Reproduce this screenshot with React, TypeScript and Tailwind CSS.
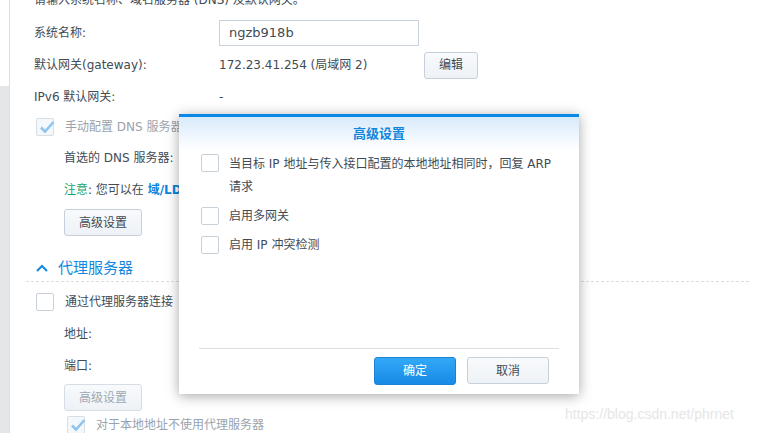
import React from 'react';

const font = { fontFamily: '"DejaVu Sans", "Noto Sans CJK SC", sans-serif' };

const CheckBox = ({ checked = false, disabled = false }: { checked?: boolean; disabled?: boolean }) => (
  <span
    className={`relative inline-block w-[18px] h-[18px] shrink-0 rounded-[2px] border ${
      disabled ? 'border-[#d6dee6] bg-[#f5f8fb]' : 'border-[#c8d1da] bg-white'
    }`}
  >
    {checked && (
      <svg viewBox="0 0 18 18" className="absolute left-[1px] top-[-1px] w-[18px] h-[18px]">
        <path d="M3 9.5 L7 13.5 L15.5 4" fill="none" stroke="#8ec6f0" strokeWidth="2.6" />
      </svg>
    )}
  </span>
);

const Btn = ({ children, w, disabled = false }: { children: React.ReactNode; w: string; disabled?: boolean }) => (
  <button
    className={`${w} h-[27px] rounded-[3px] border text-[12px] bg-gradient-to-b from-[#f8fafc] to-[#eef2f6] ${
      disabled ? 'border-[#d5dde6] text-[#9fa8b2]' : 'border-[#c6d0da] text-[#414b55]'
    }`}
  >
    {children}
  </button>
);

export default function App() {
  return (
    <div className="relative w-[765px] h-[433px] overflow-hidden bg-white text-[12px] text-[#414b55]" style={font}>
      <div className="flex h-full">
        {/* left strip */}
        <div className="w-[10px] flex flex-col border-r border-[#dde0e3]">
          <div className="h-[86px] bg-white" />
          <div className="flex-1 bg-[#e4e6e8]" />
        </div>

        {/* main panel */}
        <div className="flex-1 pl-[24px] pr-[16px]">
          <div className="mt-[-16px] h-[32px] flex items-center">请输入系统名称、域名服务器 (DNS) 及默认网关。</div>

          <div className="h-[34px] flex items-center">
            <span className="w-[185px]">系统名称:</span>
            <div className="w-[200px] h-[26px] border border-[#c9d2db] flex items-center px-[9px] text-[13px]">ngzb918b</div>
          </div>

          <div className="h-[30px] flex items-center">
            <span className="w-[185px]">默认网关(gateway):</span>
            <span className="w-[205px]">172.23.41.254 (局域网 2)</span>
            <Btn w="w-[54px]">编辑</Btn>
          </div>

          <div className="h-[34px] flex items-center">
            <span className="w-[185px]">IPv6 默认网关:</span>
            <span>-</span>
          </div>

          <div className="h-[26px] flex items-center pl-[2px] gap-[11px]">
            <CheckBox checked disabled />
            <span className="text-[#9aa3ad]">手动配置 DNS 服务器</span>
          </div>

          <div className="pl-[30px]">
            <div className="h-[36px] flex items-center">首选的 DNS 服务器:</div>
            <div className="h-[28px] flex items-center">
              <span className="text-[#1aa36e]">注意</span>
              <span>: 您可以在&nbsp;</span>
              <span className="text-[#0a86e0] font-bold">域/LDAP</span>
            </div>
            <div className="mt-[5px]">
              <Btn w="w-[78px]">高级设置</Btn>
            </div>
          </div>

          <div className="mt-[22px] h-[20px] flex items-center pl-[2px] gap-[10px] text-[#1288e0] text-[15px]">
            <svg viewBox="0 0 12 8" className="w-[12px] h-[8px]">
              <path d="M1 7 L6 2 L11 7" fill="none" stroke="#1288e0" strokeWidth="2" />
            </svg>
            <span>代理服务器</span>
          </div>
          <div className="mt-[3px] ml-[-8px] border-t border-dashed border-[#d9dde1]" />

          <div className="mt-[6px] h-[28px] flex items-center pl-[2px] gap-[11px]">
            <CheckBox />
            <span>通过代理服务器连接</span>
          </div>

          <div className="pl-[30px]">
            <div className="h-[36px] flex items-center">地址:</div>
            <div className="h-[28px] flex items-center">端口:</div>
            <div className="mt-[4px]">
              <Btn w="w-[78px]" disabled>高级设置</Btn>
            </div>
            <div className="h-[28px] flex items-center pl-[3px] gap-[11px]">
              <CheckBox checked disabled />
              <span className="text-[#9aa3ad]">对于本地地址不使用代理服务器</span>
            </div>
          </div>
        </div>
      </div>

      {/* dialog */}
      <div className="absolute left-[179px] top-[114px] w-[400px] h-[280px] bg-white border-t-[3px] border-[#0a88e6] shadow-[0_2px_12px_rgba(0,0,0,0.35)] flex flex-col">
        <div className="h-[33px] flex items-center justify-center bg-gradient-to-b from-[#d8eafb] to-white text-[13px] text-[#1386dc] font-bold">
          高级设置
        </div>
        <div className="px-[22px] pt-[3px] flex-1 flex flex-col">
          <div className="flex gap-[10px]">
            <div className="pt-[1px]">
              <CheckBox />
            </div>
            <div className="leading-[23px] w-[330px]">当目标 IP 地址与传入接口配置的本地地址相同时，回复 ARP 请求</div>
          </div>
          <div className="mt-[5px] h-[23px] flex items-center gap-[10px]">
            <CheckBox />
            <span>启用多网关</span>
          </div>
          <div className="mt-[6px] h-[23px] flex items-center gap-[10px]">
            <CheckBox />
            <span>启用 IP 冲突检测</span>
          </div>
        </div>
        <div className="mx-[20px] border-t border-[#dcdfe3]" />
        <div className="h-[45px] flex items-start justify-end gap-[11px] pr-[30px] pt-[8px]">
          <button className="w-[82px] h-[28px] rounded-[3px] border border-[#1a82d4] bg-gradient-to-b from-[#33a9f8] to-[#168ae6] text-white text-[12px]">
            确定
          </button>
          <Btn w="w-[82px]">取消</Btn>
        </div>
      </div>

      {/* watermark */}
      <div
        className="absolute left-[565px] top-[404px] text-[14px] text-[#e6e6e6]"
        style={{ fontFamily: '"Liberation Sans", Arial, sans-serif' }}
      >
        https://blog.csdn.net/phrnet
      </div>
    </div>
  );
}
